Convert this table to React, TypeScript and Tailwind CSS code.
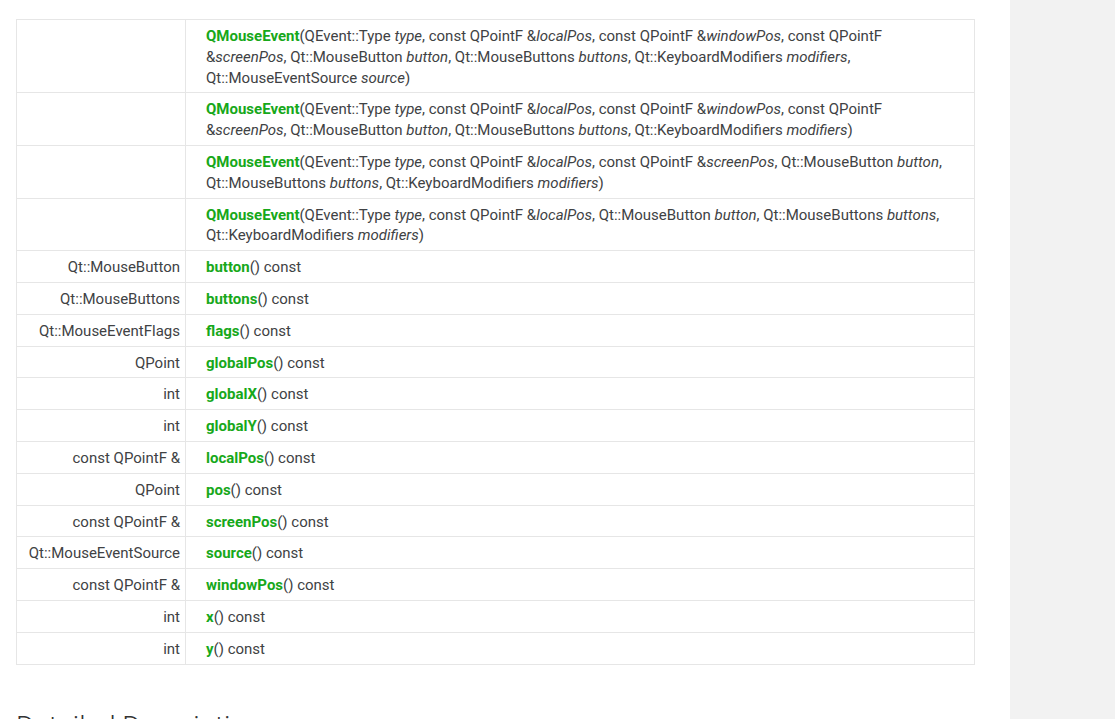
import React from 'react';

type Part = { t: string; i?: boolean; br?: boolean };

const ctorRows: Part[][] = [
  [
    { t: '(QEvent::Type ' }, { t: 'type', i: true }, { t: ', const QPointF &' }, { t: 'localPos', i: true },
    { t: ', const QPointF &' }, { t: 'windowPos', i: true }, { t: ', const QPointF' }, { t: '', br: true },
    { t: '&' }, { t: 'screenPos', i: true }, { t: ', Qt::MouseButton ' }, { t: 'button', i: true },
    { t: ', Qt::MouseButtons ' }, { t: 'buttons', i: true }, { t: ', Qt::KeyboardModifiers ' }, { t: 'modifiers', i: true },
    { t: ',' }, { t: '', br: true },
    { t: 'Qt::MouseEventSource ' }, { t: 'source', i: true }, { t: ')' },
  ],
  [
    { t: '(QEvent::Type ' }, { t: 'type', i: true }, { t: ', const QPointF &' }, { t: 'localPos', i: true },
    { t: ', const QPointF &' }, { t: 'windowPos', i: true }, { t: ', const QPointF' }, { t: '', br: true },
    { t: '&' }, { t: 'screenPos', i: true }, { t: ', Qt::MouseButton ' }, { t: 'button', i: true },
    { t: ', Qt::MouseButtons ' }, { t: 'buttons', i: true }, { t: ', Qt::KeyboardModifiers ' }, { t: 'modifiers', i: true },
    { t: ')' },
  ],
  [
    { t: '(QEvent::Type ' }, { t: 'type', i: true }, { t: ', const QPointF &' }, { t: 'localPos', i: true },
    { t: ', const QPointF &' }, { t: 'screenPos', i: true }, { t: ', Qt::MouseButton ' }, { t: 'button', i: true },
    { t: ',' }, { t: '', br: true },
    { t: 'Qt::MouseButtons ' }, { t: 'buttons', i: true }, { t: ', Qt::KeyboardModifiers ' }, { t: 'modifiers', i: true },
    { t: ')' },
  ],
  [
    { t: '(QEvent::Type ' }, { t: 'type', i: true }, { t: ', const QPointF &' }, { t: 'localPos', i: true },
    { t: ', Qt::MouseButton ' }, { t: 'button', i: true }, { t: ', Qt::MouseButtons ' }, { t: 'buttons', i: true },
    { t: ',' }, { t: '', br: true },
    { t: 'Qt::KeyboardModifiers ' }, { t: 'modifiers', i: true }, { t: ')' },
  ],
];

const members: [string, string][] = [
  ['Qt::MouseButton', 'button'],
  ['Qt::MouseButtons', 'buttons'],
  ['Qt::MouseEventFlags', 'flags'],
  ['QPoint', 'globalPos'],
  ['int', 'globalX'],
  ['int', 'globalY'],
  ['const QPointF &', 'localPos'],
  ['QPoint', 'pos'],
  ['const QPointF &', 'screenPos'],
  ['Qt::MouseEventSource', 'source'],
  ['const QPointF &', 'windowPos'],
  ['int', 'x'],
  ['int', 'y'],
];

const cellL = 'border border-[#e6e6e6] w-[169px] pr-[5px] pt-[6px] pb-[4px] text-right align-top whitespace-nowrap';
const cellR = 'border border-[#e6e6e6] pl-[20px] pr-[10px] pt-[6px] pb-[4px] text-left align-top whitespace-nowrap';

export default function App() {
  return (
    <div
      className="flex min-h-[719px] w-full bg-white text-[#404244] overflow-hidden"
      style={{ fontFamily: 'Roboto, "Open Sans", sans-serif' }}
    >
      <main className="w-[1010px] shrink-0 pl-4 pr-[35px] pt-[19px]">
        <table className="w-[959px] border-collapse text-[15px] leading-[20.8px]">
          <tbody>
            {ctorRows.map((parts, idx) => (
              <tr key={idx}>
                <td className={cellL}></td>
                <td className={cellR}>
                  <span className="font-bold text-[#17a81a]">QMouseEvent</span>
                  {parts.map((p, j) =>
                    p.br ? <br key={j} /> : p.i ? <i key={j}>{p.t}</i> : <span key={j}>{p.t}</span>
                  )}
                </td>
              </tr>
            ))}
            {members.map(([type, name]) => (
              <tr key={name}>
                <td className={cellL}>{type}</td>
                <td className={cellR}>
                  <span className="font-bold text-[#17a81a]">{name}</span>() const
                </td>
              </tr>
            ))}
          </tbody>
        </table>
        <h2 className="mt-[44px] text-[28px] font-light leading-[36px] text-[#333333]">Detailed Description</h2>
      </main>
      <aside className="flex-1 bg-[#f2f2f2]"></aside>
    </div>
  );
}
